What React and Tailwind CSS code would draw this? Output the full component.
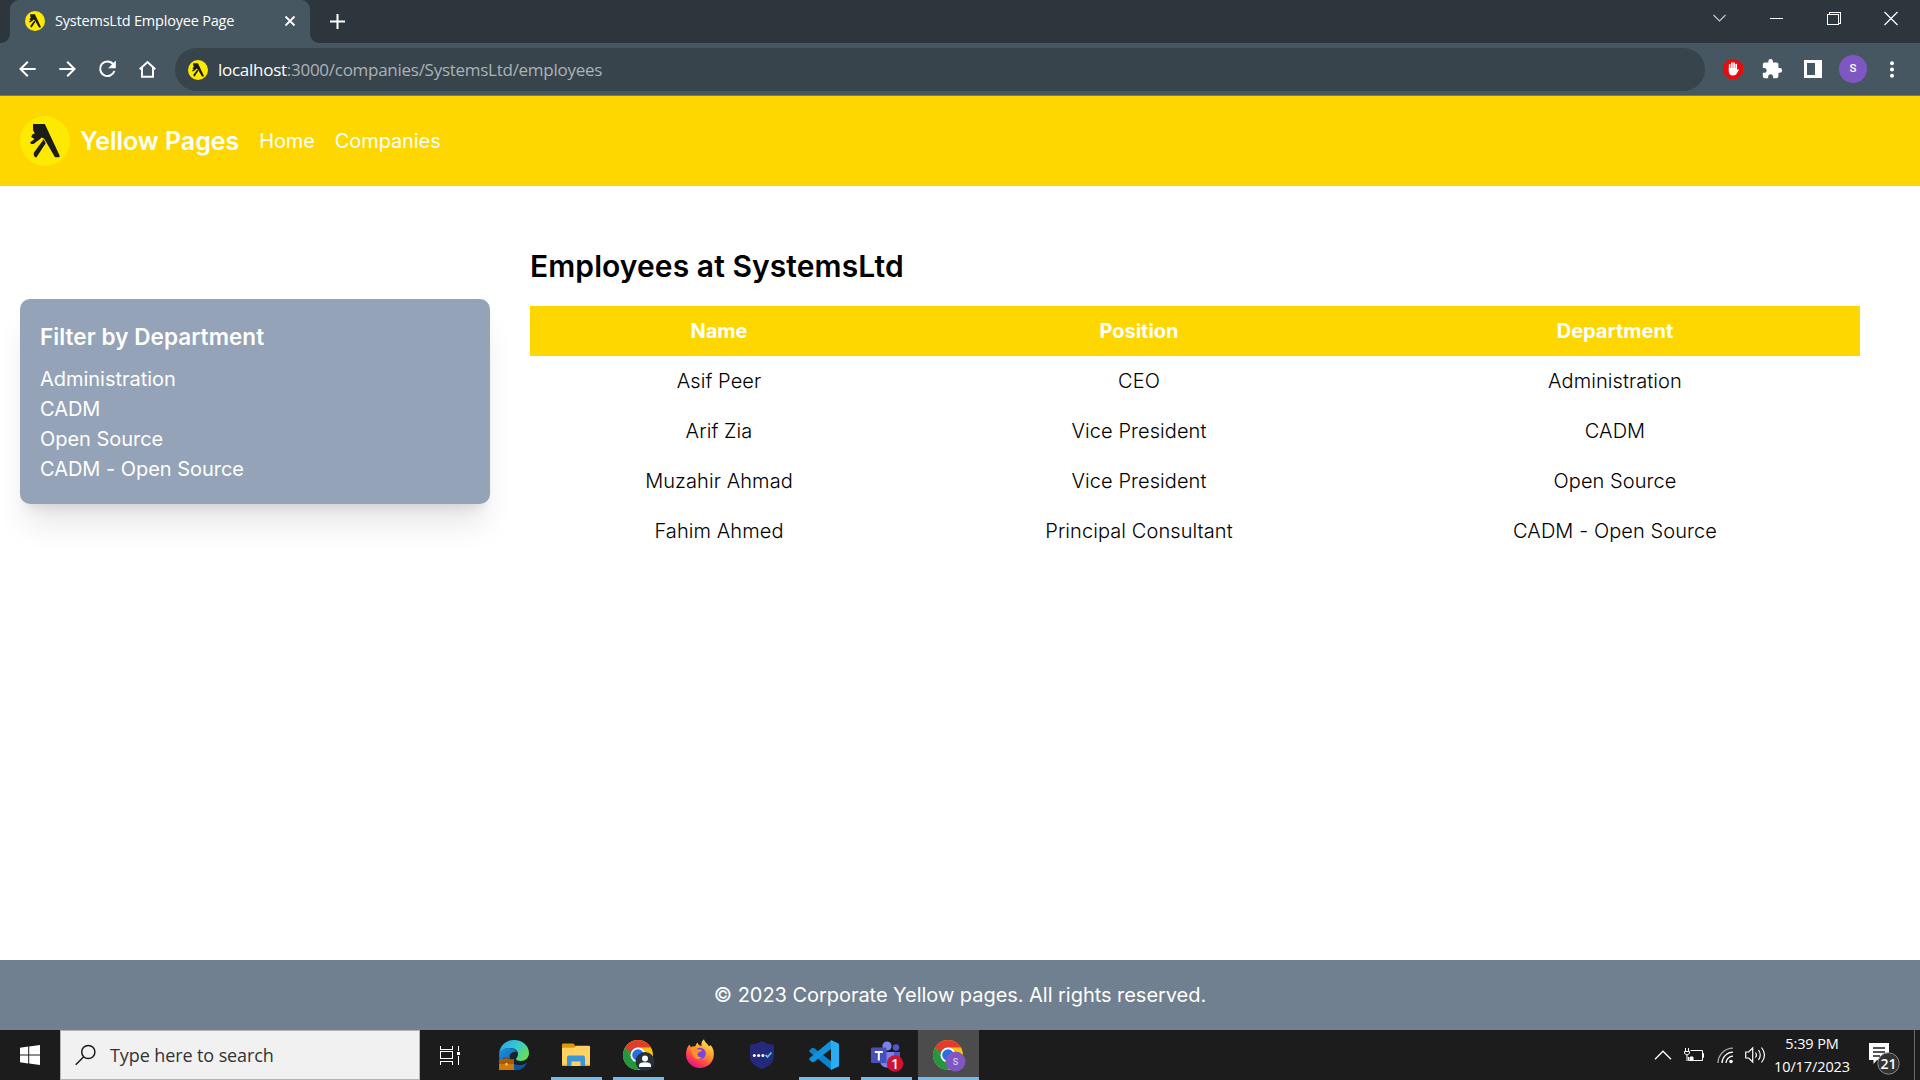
import React from "react";
import { MdExtension } from "react-icons/md";

const UI = "font-['Open_Sans','Noto_Sans',sans-serif]";

function Walker({ size }) {
  return (
    <svg width={size} height={size} viewBox="0 0 50 50" className="shrink-0">
      <circle cx="25" cy="25" r="25" fill="#fdea00" />
      <path
        d="M13 8H24.800L39.600 39.500 39.400 41.300H35L26.300 26.300 24 22.500 21.700 21.500 19.500 23.500 13.500 28H11.200L10 26.500 14.600 23 11.200 21 12.300 18.500 14.800 17.500 13 14Z"
        fill="#1c1c1a"
      />
      <path d="M23.700 23.300 25.700 27.300 16.500 41.300H15L13.700 39 14 36.500Z" fill="#1c1c1a" />
    </svg>
  );
}

function TabStrip() {
  return (
    <div className="flex h-[43px] bg-[#2c363c]">
      <div className="flex w-[10px] items-end bg-[#465761]">
        <div className="h-full w-full rounded-br-[9px] bg-[#2c363c]" />
      </div>
      <div className="flex h-full w-[300px] items-start bg-[#2c363c]">
        <div className="flex h-full w-full items-center rounded-t-[9px] bg-[#465761] pr-[14px] pb-[1px] pl-[15px] text-white">
          <Walker size={20} />
          <span className="ml-[10px] flex-1 whitespace-nowrap text-[14.5px] tracking-[-0.2px]">
            SystemsLtd Employee Page
          </span>
          <svg width="12" height="12" viewBox="0 0 12 12" stroke="#fff" strokeWidth="1.800">
            <path d="M1.500 1.500l9 9M10.500 1.500l-9 9" />
          </svg>
        </div>
      </div>
      <div className="flex w-[10px] bg-[#465761]">
        <div className="h-full w-full rounded-bl-[9px] bg-[#2c363c]" />
      </div>
      <svg width="15" height="15" viewBox="0 0 15 15" className="mt-[14px] ml-[10px]" stroke="#fff" strokeWidth="2">
        <path d="M7.500 0v15M0 7.500h15" />
      </svg>
      <div className="ml-auto flex pr-px">
        <WindowButton>
          <path d="M7.500 15l6 6 6-6" stroke="#c9cdcf" strokeWidth="1.100" />
        </WindowButton>
        <WindowButton>
          <path d="M6.500 18.500h13" shapeRendering="crispEdges" />
        </WindowButton>
        <WindowButton>
          <path d="M7.500 14.500h10.500v10h-10.500zM9.500 14.500v-2h10.500v10.500h-2" shapeRendering="crispEdges" />
        </WindowButton>
        <WindowButton>
          <path d="M7.500 12l13 13M20.500 12l-13 13" strokeWidth="1.200" />
        </WindowButton>
      </div>
    </div>
  );
}

function WindowButton({ children }) {
  return (
    <div className="flex w-[57px] justify-center">
      <svg width="28" height="36" viewBox="0 0 28 36" fill="none" stroke="#fff" strokeWidth="1">
        {children}
      </svg>
    </div>
  );
}

function NavIcon({ children }) {
  return (
    <div className="flex w-10 items-center justify-center">
      <svg width="20" height="20" viewBox="0 0 20 20" fill="none" stroke="#fff" strokeWidth="2">
        {children}
      </svg>
    </div>
  );
}

function Toolbar() {
  return (
    <div className="flex h-[53px] border-b border-[#6f7c76] bg-[#465761] pl-[7px]">
      <NavIcon>
        <path d="M18.700 10H3.500M10.800 2.700L3.500 10l7.300 7.300" />
      </NavIcon>
      <NavIcon>
        <path d="M2.300 10H17.500M10.200 2.700l7.300 7.300-7.300 7.300" />
      </NavIcon>
      <NavIcon>
        <path d="M16.200 5.200A7.300 7.300 0 1 0 17.400 12" />
        <path d="M18.800 1.500v7.700h-7.700z" fill="#fff" stroke="none" />
      </NavIcon>
      <NavIcon>
        <path d="M2.700 10.300L10.500 3l7.800 7.300M5 8.500v9.300h11V8.500" />
      </NavIcon>
      <div className="mt-[5px] ml-2 flex h-[43px] w-[1530px] items-center rounded-full bg-[#38444b] pl-[13px]">
        <Walker size={20} />
        <span className="ml-[10px] text-[17px] tracking-[-0.27px] whitespace-nowrap text-[#aab3b8]">
          <span className="text-white">localhost</span>:3000/companies/SystemsLtd/employees
        </span>
      </div>
      <div className="ml-2 flex">
        <div className="flex w-[39px] items-center justify-center">
          <svg width="20" height="20" viewBox="0 0 20 20">
            <path d="M6 0h8l6 6v8l-6 6H6l-6-6V6z" fill="#e40d0d" />
            <g stroke="#fff" strokeWidth="1.700" strokeLinecap="round" fill="none">
              <path d="M6.700 5.800v7M8.900 4v7M11.100 4v7M13.200 5.600v6" />
            </g>
            <path d="M5.850 9h8.200v2.200l1.300-1.300q.8 0 .4 1L13.500 15q-1.500 1.600-3.500 1.600-4.150 0-4.150-4.600z" fill="#fff" />
          </svg>
        </div>
        <div className="flex w-10 items-center justify-center">
          <MdExtension size={22} color="#fff" />
        </div>
        <div className="flex w-[41px] items-center justify-center">
          <svg width="18" height="18" viewBox="0 0 18 18">
            <path d="M0 0h18v18H0z" fill="#fff" />
            <path d="M3 3h8v12H3z" fill="#465761" />
          </svg>
        </div>
        <div className="flex w-10 items-center justify-center">
          <div className="flex h-7 w-7 items-center justify-center rounded-full bg-[#7e57c2] font-[Roboto,sans-serif] text-[11.5px] leading-none font-medium text-white">
            S
          </div>
        </div>
        <div className="flex w-[38px] items-center justify-center">
          <svg width="4" height="17" viewBox="0 0 4 17" fill="#fff">
            <circle cx="2" cy="2.200" r="2" />
            <circle cx="2" cy="8.500" r="2" />
            <circle cx="2" cy="14.800" r="2" />
          </svg>
        </div>
      </div>
    </div>
  );
}

function SiteNav() {
  return (
    <nav className="flex h-[90px] items-center bg-[#ffd700] pl-5 text-white">
      <Walker size={50} />
      <span className="ml-[10px] pt-[2px] text-[25px] font-semibold tracking-[-0.05px]">Yellow Pages</span>
      <a className="ml-5 text-[20px] tracking-[-0.1px]">Home</a>
      <a className="ml-5 text-[20px] tracking-[-0.1px]">Companies</a>
    </nav>
  );
}

const departments = ["Administration", "CADM", "Open Source", "CADM - Open Source"];

const employees = [
  ["Asif Peer", "CEO", "Administration"],
  ["Arif Zia", "Vice President", "CADM"],
  ["Muzahir Ahmad", "Vice President", "Open Source"],
  ["Fahim Ahmed", "Principal Consultant", "CADM - Open Source"],
];

function Content() {
  return (
    <main className="flex flex-1 bg-white pr-[60px] pl-5 text-black">
      <aside className="mt-[113px] h-[205px] w-[470px] rounded-[10px] bg-[#94a3b8] p-5 text-white shadow-[0_25px_31px_-6px_rgba(0,0,0,0.1),0_10px_12px_-7px_rgba(0,0,0,0.1)]">
        <h3 className="mb-[10px] text-[22.5px] leading-[35px] font-semibold tracking-[0.07px]">Filter by Department</h3>
        <ul className="text-[20px] leading-[30px] tracking-[-0.03px]">
          {departments.map((d) => (
            <li key={d}>{d}</li>
          ))}
        </ul>
      </aside>
      <section className="ml-10 flex-1 pt-[60px]">
        <h1 className="mb-5 text-[30px] leading-10 font-semibold tracking-[0.08px]">Employees at SystemsLtd</h1>
        <table className="w-full table-fixed text-center text-[20px] leading-[30px]">
          <colgroup>
            <col className="w-[378px]" />
            <col className="w-[462px]" />
            <col className="w-[490px]" />
          </colgroup>
          <thead>
            <tr className="h-[50px] bg-[#ffd700] text-white">
              <th className="font-bold">Name</th>
              <th className="font-bold">Position</th>
              <th className="font-bold">Department</th>
            </tr>
          </thead>
          <tbody className="font-light tracking-[0.08px]">
            {employees.map((row) => (
              <tr key={row[0]} className="h-[50px]">
                {row.map((cell) => (
                  <td key={cell}>{cell}</td>
                ))}
              </tr>
            ))}
          </tbody>
        </table>
      </section>
    </main>
  );
}

function ChromeIcon({ children }) {
  return (
    <svg width="34" height="34" viewBox="0 0 34 34">
      <circle cx="16" cy="16" r="15" fill="#fbc116" />
      <path d="M3 8.500A15 15 0 0 0 16 31l6.500-11.300L9.500 19.700z" fill="#24963f" />
      <path d="M3 8.500L9.500 19.700 16 8.500z" fill="#24963f" />
      <path d="M3 8.500A15 15 0 0 1 29 8.500H16a7.500 7.500 0 0 0-7 5z" fill="#e33b2e" />
      <circle cx="16" cy="16" r="7.500" fill="#fff" />
      <circle cx="16" cy="16" r="5.800" fill="#2a6de0" />
      {children}
    </svg>
  );
}

function EdgeIcon() {
  return (
    <svg width="32" height="32" viewBox="0 0 32 32">
      <defs>
        <linearGradient id="edgeTop" x1="0" x2="1" y1="0.2" y2="0.7">
          <stop offset="0" stopColor="#25a6e6" />
          <stop offset="0.5" stopColor="#35c8d4" />
          <stop offset="1" stopColor="#6be04a" />
        </linearGradient>
        <linearGradient id="edgeSide" x1="0" x2="1" y1="0" y2="1">
          <stop offset="0" stopColor="#1b95e0" />
          <stop offset="1" stopColor="#0a4f9c" />
        </linearGradient>
      </defs>
      <path d="M1 15C2 6 8 1 16 1c9 0 15 6 15 13 0 5-4 8-8 8-3 0-5-1-5-2 0-1 2-2 2-5 0-4-4-6-8-6-5 0-10 3-11 6z" fill="url(#edgeTop)" />
      <path d="M1 15c2-4 6-6 10-6 5 0 8 3 8.500 5C16 11.500 11.500 14 11.500 19c0 6 5 9 11 7-2 3-4 5-7 5C7 31 1 25 1 15z" fill="url(#edgeSide)" />
      <path d="M19.500 13.500c-3-2-7 0-7.500 4 0 3 2 5.500 4 6 3 1.500 10 1 12-1-1 0-3 .5-5 .5-4 0-5.500-1.500-5.500-3 0-1 2.500-2.500 2-6.500z" fill="#16252d" />
      <path d="M16 31c6 1 11-2 13-7.500-3 2.500-8 3.500-13 1.500z" fill="#0d559f" />
      <rect x="1" y="20.500" width="15" height="10.500" fill="#c97a10" />
      <path d="M1 20.500h15v4.500H1z" fill="#a85a08" />
      <path d="M5.500 20.500v-1.500h6v1.500" fill="none" stroke="#8a4a08" strokeWidth="1.300" />
      <path d="M7.500 24h2v2.500h-2z" fill="#ffd24a" />
    </svg>
  );
}

function FolderIcon() {
  return (
    <svg width="28" height="24" viewBox="0 0 28 24">
      <path d="M0 1.500Q0 .5 1 .5h10.500l2 2.500v3H0z" fill="#dd9a05" />
      <path d="M0 4.800h12l2-2H27q1 0 1 1V22q0 1-1 1H1q-1 0-1-1z" fill="#ffd263" />
      <path d="M5 23V14.500q0-2 2-2h14q2 0 2 2V23h-4.500v-4.500h-9V23z" fill="#3a96d8" />
      <path d="M0 21.800h5V23H1q-1 0-1-1zM23 21.800h5q0 1.200-1 1.200h-4z" fill="#e0a62c" />
    </svg>
  );
}

function FirefoxIcon() {
  return (
    <svg width="30" height="30" viewBox="0 0 30 30">
      <defs>
        <linearGradient id="foxBody" x1="0.8" x2="0.25" y1="0.05" y2="0.95">
          <stop offset="0" stopColor="#ffe94a" />
          <stop offset="0.4" stopColor="#ff9a2b" />
          <stop offset="0.75" stopColor="#ff3f4d" />
          <stop offset="1" stopColor="#e31587" />
        </linearGradient>
      </defs>
      <path d="M4.500 5.500c.5 1.500 1 2 1.500 2.500 1-.5 3-1 4.500-.700 0-1.500 1-3 2-3.800 0 1.500 2 3 4 3.500-.500-3 .5-5.500 2.500-6.700.5 3 3 4 5 7 1-.200 1.500-1.200 1.500-1.200 3 3 3.700 7 3.200 11C27.700 24.500 22 29 15 29 7 29 1 23 1 15.500 1 11 2.500 7.500 4.500 5.500z" fill="url(#foxBody)" />
      <circle cx="15" cy="14.500" r="5.800" fill="#7b42dd" />
      <path d="M5 9.500c3-1.500 6.500-.500 8 1l4 .300c0 2-3 2-4 3.200-1.500 2 .5 5 4 4-1.500 3-7 3-9-1-1.300-2.600-.5-4.500-3-7.500z" fill="#ff922b" />
    </svg>
  );
}

function ShieldIcon() {
  return (
    <svg width="24" height="28" viewBox="0 0 24 28">
      <path d="M12 0c4 2.500 8 3.500 12 3.500V15c0 6-4 10-12 13C4 25 0 21 0 15V3.500C4 3.500 8 2.500 12 0z" fill="#25297c" />
      <g fill="#fff">
        <circle cx="4.300" cy="14.500" r="1.500" />
        <circle cx="8.600" cy="14.500" r="1.500" />
        <circle cx="12.900" cy="14.500" r="1.500" />
      </g>
      <path d="M15.500 14l2 2 4-4.500" fill="none" stroke="#56c5d8" strokeWidth="1.800" />
    </svg>
  );
}

function CodeIcon() {
  return (
    <svg width="30" height="30" viewBox="0 0 30 30">
      <path d="M.5 10.200L3 8q1-.600 2 0L22.500 21.500V30L.7 12q-.8-.9-.2-1.800z" fill="#0b84cf" />
      <path d="M.5 19.800L3 22q1 .600 2 0L22.500 8.500V0L.7 18q-.8.900-.2 1.800z" fill="#1391db" />
      <path d="M22 0l7 3.200q1 .500 1 1.500v20.600q0 1-1 1.500L22 30z" fill="#29adf2" />
    </svg>
  );
}

function TeamsIcon() {
  return (
    <svg width="33" height="31" viewBox="0 0 33 31">
      <circle cx="16" cy="5" r="4.600" fill="#7b83eb" />
      <circle cx="25" cy="6.500" r="3.200" fill="#5059c9" />
      <path d="M19 11h10v7c0 5-4 7-8 6z" fill="#5059c9" />
      <path d="M9 11h14v9c0 8-12 9-14 1z" fill="#7b83eb" />
      <rect x="0" y="6.500" width="15.500" height="15.500" rx="1.200" fill="#4650bb" />
      <path d="M3.800 11h8M7.800 11v8.500" stroke="#fff" strokeWidth="2" />
      <circle cx="24" cy="22.500" r="8.300" fill="#cf1432" />
      <text x="24" y="27.500" fill="#fff" fontSize="14" fontWeight="600" textAnchor="middle" className="font-['Open_Sans',sans-serif]">
        1
      </text>
    </svg>
  );
}

function TaskSlot({ children, running, active, nudge = "" }) {
  return (
    <div className="flex w-[62px] justify-center">
      <div className={`flex h-full flex-col ${active ? "w-[61px] bg-[#4c4c4c]" : "w-[51px]"}`}>
        <div className={`flex flex-1 items-center justify-center ${nudge}`}>{children}</div>
        <div className={`h-[3px] ${running || active ? "bg-[#76b9ed]" : ""}`} />
      </div>
    </div>
  );
}

function Taskbar() {
  return (
    <div className="flex h-[50px] bg-[#1c1c1c] text-white">
      <div className="flex w-[60px] items-center justify-center">
        <svg width="20" height="20" viewBox="0 0 20 20" fill="#fff">
          <path d="M0 2.700L8.200 1.600V9.500H0zM9.200 1.400L20 0v9.500H9.200zM0 10.500h8.200v7.900L0 17.300zM9.200 10.500H20V20L9.200 18.600z" />
        </svg>
      </div>
      <div className="flex w-[360px] items-center border border-[#b4b4b4] bg-[#f1f1f1] pl-[14px]">
        <svg width="22" height="22" viewBox="0 0 22 22" fill="none" stroke="#1a1a1a" strokeWidth="1.500" className="mb-[1px]">
          <circle cx="13.300" cy="8" r="6.600" />
          <path d="M8.500 13L.7 20.700" />
        </svg>
        <span className="ml-[13px] text-[18px] tracking-[-0.1px] whitespace-nowrap text-[#333]">Type here to search</span>
      </div>
      <div className="flex w-[63px] items-center pl-[19px]">
        <svg width="22" height="20" viewBox="0 0 22 20" fill="none" stroke="#fff" strokeWidth="1" shapeRendering="crispEdges">
          <path d="M1.500 1v3h12V1M1.500 19.500v-3h12v3M1.500 6.500h12v7h-12zM19.500 1v5M19.500 10.500v9" />
          <path d="M18 7h3v3h-3z" fill="#fff" stroke="none" />
        </svg>
      </div>
      <TaskSlot nudge="pt-[3px]">
        <EdgeIcon />
      </TaskSlot>
      <TaskSlot running nudge="pt-[2px]">
        <FolderIcon />
      </TaskSlot>
      <TaskSlot running nudge="pt-[5px] pl-[2px]">
        <ChromeIcon>
          <circle cx="23" cy="22.500" r="9.500" fill="#26333c" />
          <circle cx="23" cy="19.500" r="3" fill="#fff" />
          <path d="M17 28v-1.500q0-3.300 6-3.300t6 3.300V28z" fill="#fff" />
        </ChromeIcon>
      </TaskSlot>
      <TaskSlot nudge="pt-[1px]">
        <FirefoxIcon />
      </TaskSlot>
      <TaskSlot nudge="pt-[2px]">
        <ShieldIcon />
      </TaskSlot>
      <TaskSlot running nudge="pt-[3px]">
        <CodeIcon />
      </TaskSlot>
      <TaskSlot running nudge="pt-[5px] pl-[2px]">
        <TeamsIcon />
      </TaskSlot>
      <TaskSlot active nudge="pt-[5px] pl-[2px]">
        <ChromeIcon>
          <circle cx="23.500" cy="22.500" r="10" fill="#7e57c2" />
          <text x="23.500" y="25.800" fill="#d5c5ee" fontSize="9" fontWeight="500" textAnchor="middle" className="font-[Roboto,sans-serif]">
            S
          </text>
        </ChromeIcon>
      </TaskSlot>
      <div className="ml-auto flex items-center">
        <svg width="18" height="10" viewBox="0 0 18 10" fill="none" stroke="#fff" strokeWidth="1.300">
          <path d="M1 9.200L9 1.200l8 8" />
        </svg>
        <svg width="20" height="14" viewBox="0 0 20 14" fill="none" stroke="#fff" strokeWidth="1" className="ml-[12px]">
          <path d="M6.500 2.500h12v10h-14V9M18.500 5.500h1v4h-1M1.500 0v3M4.500 0v3M.5 3.500h5v2q-2.500 3-5 0zM3 7v6" />
          <path d="M6 9h3v3H6z" fill="#fff" />
        </svg>
        <svg width="17" height="17" viewBox="0 0 17 17" fill="none" stroke="#fff" strokeWidth="1.300" className="ml-[13px]">
          <path d="M1 16A15 15 0 0 1 16 1.200" stroke="#aaa" />
          <path d="M5 16A11 11 0 0 1 16 5.200M9 16a7 7 0 0 1 7-6.800" />
          <circle cx="14" cy="14.500" r="1.800" fill="#fff" stroke="none" />
        </svg>
        <svg width="21" height="18" viewBox="0 0 21 18" fill="none" stroke="#fff" strokeWidth="1.200" className="ml-[11px]">
          <path d="M.7 6h3l4-4v14l-4-4h-3z" />
          <path d="M10.500 6.500q1.800 2.500 0 5M13.500 4q3.500 5 0 10M16.500 1.500q6 7.500 0 15" />
        </svg>
        <div className="ml-[6px] w-[80px] text-center text-[14.5px] leading-[23px] tracking-[-0.1px] whitespace-nowrap">
          <div>5:39 PM</div>
          <div>10/17/2023</div>
        </div>
        <svg width="33" height="34" viewBox="0 0 33 34" className="mt-[8px] ml-[17px]">
          <path d="M0 1h20v17H8l-3.500 4V18H0z" fill="#fff" />
          <path d="M4 6h12M4 10h12M4 14h7" stroke="#1c1c1c" strokeWidth="1.300" />
          <circle cx="19.500" cy="21.500" r="10.700" fill="#333" stroke="#8a8a8a" strokeWidth="1" />
          <text x="19.500" y="26.500" fill="#fff" fontSize="14" fontWeight="600" textAnchor="middle" className="font-['Open_Sans',sans-serif]">
            21
          </text>
        </svg>
        <div className="ml-[12px] h-[50px] w-[6px] border-l border-[#6a6a6a]" />
      </div>
    </div>
  );
}

export default function App() {
  return (
    <div className="flex h-[1080px] w-[1920px] flex-col overflow-hidden bg-white font-[Inter,sans-serif]">
      <header className={UI}>
        <TabStrip />
        <Toolbar />
      </header>
      <SiteNav />
      <Content />
      <footer className="flex h-[70px] items-center justify-center bg-[#708090] text-[20px] tracking-[-0.04px] text-white">
        © 2023 Corporate Yellow pages. All rights reserved.
      </footer>
      <div className={UI}>
        <Taskbar />
      </div>
    </div>
  );
}
